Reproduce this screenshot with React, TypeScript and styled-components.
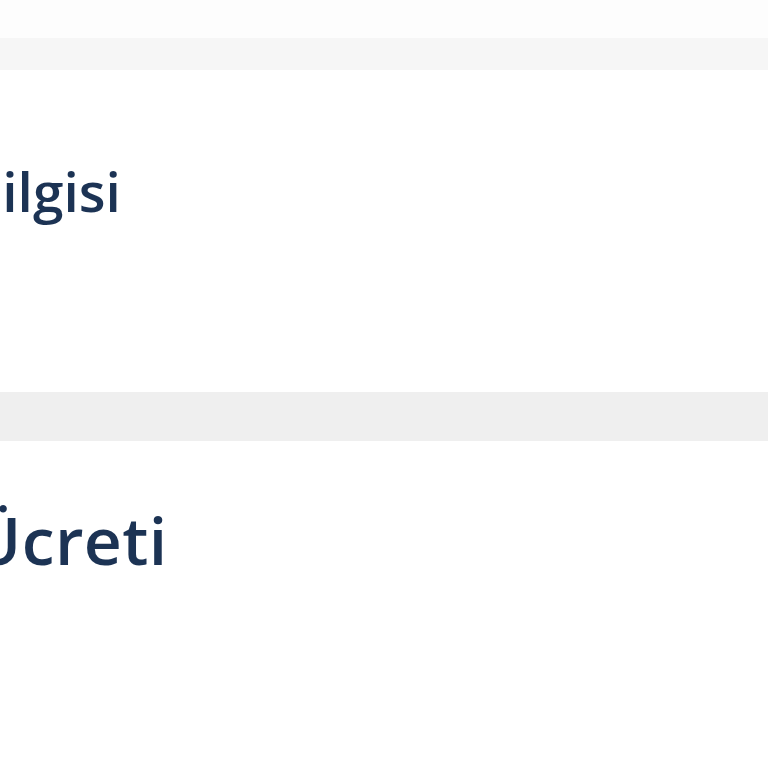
import React from "react";
import styled, { createGlobalStyle } from "styled-components";

const GlobalStyle = createGlobalStyle`
    html, body {
        margin: 0;
        padding: 0;
        background: #ffffff;
        overflow: hidden;
    }
`

const Page = styled.main`
    width: 768px;
    height: 768px;
    display: flex;
    flex-direction: column;
    overflow: hidden;
    font-family: "Open Sans", "Noto Sans", sans-serif;
`

const Band = styled.div<{ $height: number; $tone: string }>`
    flex: 0 0 ${props => props.$height}px;
    background: ${props => props.$tone};
`

const Section = styled.section<{ $height: number }>`
    flex: 0 0 ${props => props.$height}px;
    display: flex;
    align-items: center;
    background: #ffffff;
    overflow: hidden;
`

const Title = styled.h2<{ $size: number; $shift: number; $lift: number; $track: number }>`
    margin: 0 0 0 ${props => props.$shift}px;
    position: relative;
    top: ${props => props.$lift}px;
    font-size: ${props => props.$size}px;
    font-weight: 600;
    color: #1c3354;
    white-space: nowrap;
    letter-spacing: ${props => props.$track}px;
`

export default function App() {
    return (
        <Page>
            <GlobalStyle/>
            <Band $height={38} $tone="#fdfdfd"/>
            <Band $height={32} $tone="#f6f6f6"/>
            <Section $height={322}>
                <Title $size={55} $shift={-34} $lift={-41} $track={0}>Bilgisi</Title>
            </Section>
            <Band $height={49} $tone="#efefef"/>
            <Section $height={327}>
                <Title $size={66} $shift={-233} $lift={-66} $track={0.4}>Kargo Ücreti</Title>
            </Section>
        </Page>
    );
}
